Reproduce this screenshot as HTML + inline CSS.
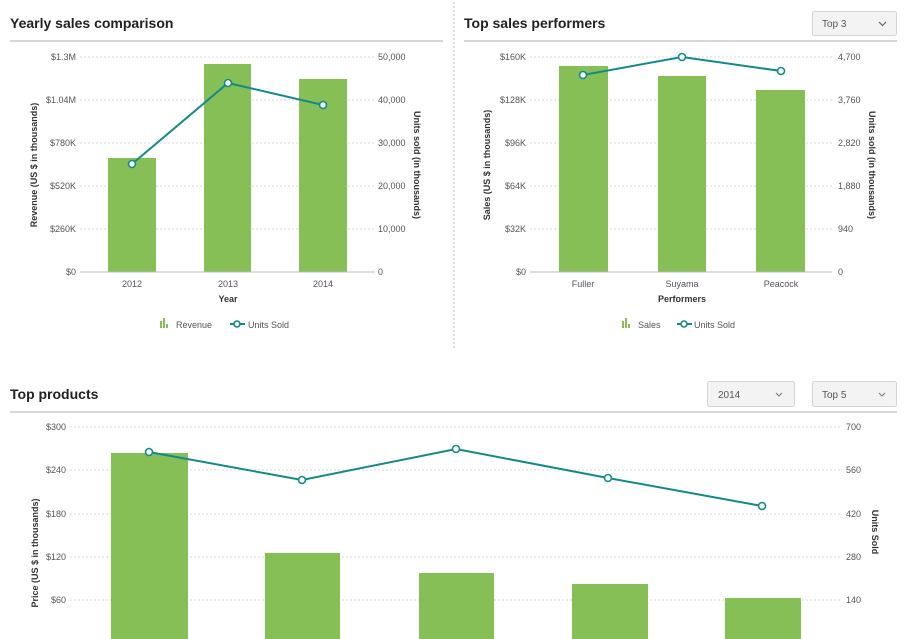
<!DOCTYPE html>
<html><head><meta charset="utf-8"><style>
html,body{margin:0;padding:0;background:#fff;width:908px;height:639px;overflow:hidden}
svg{display:block;font-family:"Liberation Sans",Arial,sans-serif}
.t{font-size:14px;font-weight:bold;fill:#222}
.a{font-size:9px;fill:#555}
.at{font-size:9px;font-weight:bold;fill:#333}
.g{stroke:#d8d8d8;stroke-dasharray:2,2;stroke-width:1}
.b{fill:#86bf56}
.l{fill:none;stroke:#138a8a;stroke-width:2}
.p{fill:#fff;stroke:#138a8a;stroke-width:1.6}
.dd{fill:#f3f3f3;stroke:#d4d4d4}
</style></head><body>
<svg width="908" height="639" viewBox="0 0 908 639">
<line x1="454" y1="2" x2="454" y2="350" stroke="#bbb" stroke-dasharray="2,2"/>
<!-- Panel 1 -->
<text x="10" y="28" class="t">Yearly sales comparison</text>
<line x1="10" y1="41" x2="443" y2="41" stroke="#ccc" stroke-width="1.5"/>
<g class="a" text-anchor="end">
<text x="76" y="60">$1.3M</text><text x="76" y="103">$1.04M</text><text x="76" y="146">$780K</text><text x="76" y="189">$520K</text><text x="76" y="232">$260K</text><text x="76" y="275">$0</text></g>
<g class="a"><text x="378" y="60">50,000</text><text x="378" y="103">40,000</text><text x="378" y="146">30,000</text><text x="378" y="189">20,000</text><text x="378" y="232">10,000</text><text x="378" y="275">0</text></g>
<g class="g"><line x1="80" y1="57" x2="375" y2="57"/><line x1="80" y1="100" x2="375" y2="100"/><line x1="80" y1="143" x2="375" y2="143"/><line x1="80" y1="186" x2="375" y2="186"/><line x1="80" y1="229" x2="375" y2="229"/></g>
<rect class="b" x="108" y="158" width="48" height="114"/><rect class="b" x="204" y="64" width="47" height="208"/><rect class="b" x="299" y="79" width="48" height="193"/>
<line x1="80" y1="272" x2="375" y2="272" stroke="#bbb"/>
<polyline class="l" points="132,164 228,83 323,105"/>
<circle class="p" cx="132" cy="164" r="3.5"/><circle class="p" cx="228" cy="83" r="3.5"/><circle class="p" cx="323" cy="105" r="3.5"/>
<g class="a" text-anchor="middle"><text x="132" y="287">2012</text><text x="228" y="287">2013</text><text x="323" y="287">2014</text></g>
<text x="228" y="302" class="at" text-anchor="middle">Year</text>
<text class="at" transform="translate(37,165) rotate(-90)" text-anchor="middle">Revenue (US $ in thousands)</text>
<text class="at" transform="translate(414,165) rotate(90)" text-anchor="middle">Units sold (in thousands)</text>
<g fill="#86bf56"><rect x="160" y="321" width="2" height="7"/><rect x="163" y="318" width="2" height="10"/><rect x="166" y="324" width="2" height="4"/></g>
<text x="176" y="328" class="a">Revenue</text>
<line x1="230" y1="324" x2="245" y2="324" stroke="#138a8a" stroke-width="2"/><circle class="p" cx="237" cy="324" r="3"/>
<text x="248" y="328" class="a">Units Sold</text>
<!-- Panel 2 -->
<text x="464" y="28" class="t">Top sales performers</text>
<rect class="dd" x="812.5" y="11.5" width="84" height="24" rx="2"/>
<text x="822" y="27" class="a" style="font-size:10px">Top 3</text>
<path d="M879 22l3.5 3.5 3.5-3.5" stroke="#666" fill="none" stroke-width="1.2"/>
<line x1="464" y1="41" x2="897" y2="41" stroke="#ccc" stroke-width="1.5"/>
<g class="a" text-anchor="end"><text x="526" y="60">$160K</text><text x="526" y="103">$128K</text><text x="526" y="146">$96K</text><text x="526" y="189">$64K</text><text x="526" y="232">$32K</text><text x="526" y="275">$0</text></g>
<g class="a"><text x="838" y="60">4,700</text><text x="838" y="103">3,760</text><text x="838" y="146">2,820</text><text x="838" y="189">1,880</text><text x="838" y="232">940</text><text x="838" y="275">0</text></g>
<g class="g"><line x1="530" y1="57" x2="832" y2="57"/><line x1="530" y1="100" x2="832" y2="100"/><line x1="530" y1="143" x2="832" y2="143"/><line x1="530" y1="186" x2="832" y2="186"/><line x1="530" y1="229" x2="832" y2="229"/></g>
<rect class="b" x="559" y="66" width="49" height="206"/><rect class="b" x="658" y="76" width="48" height="196"/><rect class="b" x="756" y="90" width="49" height="182"/>
<line x1="530" y1="272" x2="832" y2="272" stroke="#bbb"/>
<polyline class="l" points="583,75 682,57 781,71"/>
<circle class="p" cx="583" cy="75" r="3.5"/><circle class="p" cx="682" cy="57" r="3.5"/><circle class="p" cx="781" cy="71" r="3.5"/>
<g class="a" text-anchor="middle"><text x="583" y="287">Fuller</text><text x="682" y="287">Suyama</text><text x="781" y="287">Peacock</text></g>
<text x="682" y="302" class="at" text-anchor="middle">Performers</text>
<text class="at" transform="translate(490,165) rotate(-90)" text-anchor="middle">Sales (US $ in thousands)</text>
<text class="at" transform="translate(869,165) rotate(90)" text-anchor="middle">Units sold (in thousands)</text>
<g fill="#86bf56"><rect x="622" y="321" width="2" height="7"/><rect x="625" y="318" width="2" height="10"/><rect x="628" y="324" width="2" height="4"/></g>
<text x="638" y="328" class="a">Sales</text>
<line x1="677" y1="324" x2="692" y2="324" stroke="#138a8a" stroke-width="2"/><circle class="p" cx="684" cy="324" r="3"/>
<text x="694" y="328" class="a">Units Sold</text>
<!-- Panel 3 -->
<text x="10" y="399" class="t">Top products</text>
<rect class="dd" x="707.5" y="381.5" width="87" height="25" rx="2"/>
<text x="718" y="398" class="a" style="font-size:10px">2014</text>
<path d="M776 393l3 3 3-3" stroke="#777" fill="none"/>
<rect class="dd" x="812.5" y="381.5" width="84" height="25" rx="2"/>
<text x="822" y="398" class="a" style="font-size:10px">Top 5</text>
<path d="M879 393l3 3 3-3" stroke="#777" fill="none"/>
<line x1="10" y1="412" x2="897" y2="412" stroke="#ccc" stroke-width="1.5"/>
<g class="a" text-anchor="end"><text x="66" y="430">$300</text><text x="66" y="473">$240</text><text x="66" y="517">$180</text><text x="66" y="560">$120</text><text x="66" y="603">$60</text></g>
<g class="a"><text x="846" y="430">700</text><text x="846" y="473">560</text><text x="846" y="517">420</text><text x="846" y="560">280</text><text x="846" y="603">140</text></g>
<g class="g"><line x1="70" y1="427" x2="840" y2="427"/><line x1="70" y1="470" x2="840" y2="470"/><line x1="70" y1="514" x2="840" y2="514"/><line x1="70" y1="557" x2="840" y2="557"/><line x1="70" y1="600" x2="840" y2="600"/></g>
<rect class="b" x="111" y="453" width="77" height="190"/><rect class="b" x="265" y="553" width="75" height="90"/><rect class="b" x="419" y="573" width="75" height="70"/><rect class="b" x="572" y="584" width="76" height="60"/><rect class="b" x="725" y="598" width="76" height="45"/>
<polyline class="l" points="149,452 302,480 456,449 608,478 762,506"/>
<circle class="p" cx="149" cy="452" r="3.5"/><circle class="p" cx="302" cy="480" r="3.5"/><circle class="p" cx="456" cy="449" r="3.5"/><circle class="p" cx="608" cy="478" r="3.5"/><circle class="p" cx="762" cy="506" r="3.5"/>
<text class="at" transform="translate(38,553) rotate(-90)" text-anchor="middle">Price (US $ in thousands)</text>
<text class="at" transform="translate(872,532) rotate(90)" text-anchor="middle">Units Sold</text>
</svg>
</body></html>
